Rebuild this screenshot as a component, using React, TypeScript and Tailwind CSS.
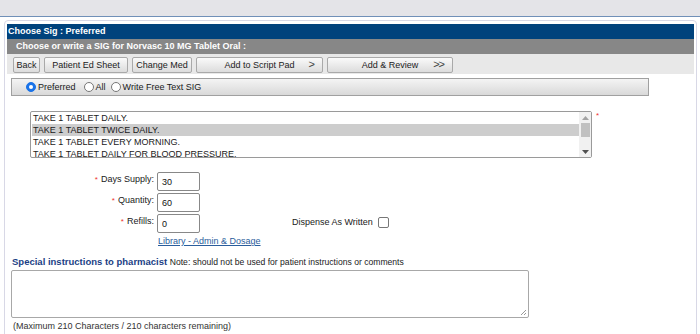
import React, { useState } from 'react';

const sigs = [
    'TAKE 1 TABLET DAILY.',
    'TAKE 1 TABLET TWICE DAILY.',
    'TAKE 1 TABLET EVERY MORNING.',
    'TAKE 1 TABLET DAILY FOR BLOOD PRESSURE.',
];

const ToolButton: React.FC<{ label: string; width: string; arrow?: string }> = ({ label, width, arrow }) => (
    <button
        className={`relative h-[16px] ${width} whitespace-nowrap rounded-[2px] border border-[#a9a9a9] bg-gradient-to-b from-[#fafafa] to-[#dcdcdc] text-[9px] leading-[14px] text-[#222] flex items-center justify-center`}
    >
        <span>{label}</span>
        {arrow && <span className="absolute right-[8px] top-0 text-[11px] leading-[13px] text-[#444] tracking-[-1px]">{arrow}</span>}
    </button>
);

const FieldRow: React.FC<{ label: string; value: string; extra?: React.ReactNode }> = ({ label, value, extra }) => (
    <div className="flex items-start h-[21px]">
        <div className="w-[150px] text-right pr-[3px] pt-[2px] leading-[11px] whitespace-nowrap">
            <span className="text-[#e33] text-[8px] align-top mr-[3px]">*</span>
            {label}:
        </div>
        <div className="w-[43px] h-[19px] border border-[#888] rounded-[2px] pl-[4px] pt-[4px] leading-[11px] text-[#111]">{value}</div>
        {extra}
    </div>
);

export default function App() {
    const [selected, setSelected] = useState(1);

    return (
        <div className="w-[700px] h-[334px] overflow-hidden bg-white font-['Liberation_Sans',Arial,sans-serif] text-[9px] text-[#1a1a1a]">
            <div className="h-[17px] bg-[#e4e4e8] border-b border-[#7090b8]" />

            <div className="mt-[3px] ml-[4px] mr-[3px] h-[320px] border border-[#d8d8e6] rounded-t-[4px] px-[2px] pt-[3px]">
                <div className="h-[15px] bg-[#00427c] text-white font-bold leading-[15px] pl-[1px]">Choose Sig : Preferred</div>
                <div className="h-[15px] bg-[#878787] text-white font-bold leading-[15px] pl-[9px]">
                    Choose or write a SIG for Norvasc 10 MG Tablet Oral :
                </div>
                <div className="h-[20px] bg-[#e8e8e8] flex items-start gap-[4px] pl-[6px] pt-[3px]">
                    <ToolButton label="Back" width="w-[27px]" />
                    <ToolButton label="Patient Ed Sheet" width="w-[84px]" />
                    <ToolButton label="Change Med" width="w-[60px]" />
                    <ToolButton label="Add to Script Pad" width="w-[127px]" arrow=">" />
                    <ToolButton label="Add & Review" width="w-[126px]" arrow=">>" />
                </div>

                <div className="mt-[4px] ml-[4px] w-[638px] h-[18px] border border-[#a0a0a0] bg-gradient-to-b from-[#f4f4f4] to-[#d9d9d9] flex items-center pl-[14px] leading-[11px]">
                    <label className="flex items-center gap-[2px]">
                        <span className="w-[10px] h-[10px] rounded-full bg-[#1a73e8] border border-[#1a73e8] flex items-center justify-center">
                            <span className="w-[4px] h-[4px] rounded-full bg-white" />
                        </span>
                        Preferred
                    </label>
                    <label className="flex items-center gap-[2px] ml-[8px]">
                        <span className="w-[10px] h-[10px] rounded-full bg-white border border-[#777]" />
                        All
                    </label>
                    <label className="flex items-center gap-[2px] ml-[5px]">
                        <span className="w-[10px] h-[10px] rounded-full bg-white border border-[#777]" />
                        Write Free Text SIG
                    </label>
                </div>

                <div className="flex items-start mt-[15px] ml-[23px]">
                    <div className="w-[562px] h-[47px] border border-[#9a9a9a] rounded-[2px] flex">
                        <div className="flex-1 pl-[1px]">
                            {sigs.map((s, i) => (
                                <div
                                    key={s}
                                    onClick={() => setSelected(i)}
                                    className={`h-[12px] leading-[12px] pl-[1px] ${i === selected ? 'bg-[#cdcdcd]' : ''}`}
                                >
                                    {s}
                                </div>
                            ))}
                        </div>
                        <div className="w-[12px] bg-[#f1f1f1] flex flex-col items-center">
                            <div className="h-[11px] flex items-center justify-center">
                                <svg width="7" height="4" viewBox="0 0 7 4"><path d="M0 4 L3.5 0 L7 4 Z" fill="#a3a3a3" /></svg>
                            </div>
                            <div className="w-[9px] h-[14px] bg-[#c1c1c1]" />
                            <div className="flex-1" />
                            <div className="h-[11px] flex items-center justify-center">
                                <svg width="7" height="4" viewBox="0 0 7 4"><path d="M0 0 L7 0 L3.5 4 Z" fill="#505050" /></svg>
                            </div>
                        </div>
                    </div>
                    <span className="text-[#e33] text-[8px] leading-[8px] ml-[4px] mt-[1px]">*</span>
                </div>

                <div className="mt-[14px]">
                    <FieldRow label="Days Supply" value="30" />
                    <FieldRow label="Quantity" value="60" />
                    <FieldRow
                        label="Refills"
                        value="0"
                        extra={
                            <div className="flex items-center ml-[92px] mt-[3px] leading-[11px] whitespace-nowrap">
                                Dispense As Written
                                <span className="ml-[5px] w-[11px] h-[11px] border border-[#777] rounded-[2px] bg-white" />
                            </div>
                        }
                    />
                    <div className="ml-[151px] mt-[1px] leading-[11px]">
                        <a className="text-[#2a5d9c] underline">Library - Admin &amp; Dosage</a>
                    </div>
                </div>

                <div className="mt-[9px] ml-[5px] leading-[11px] whitespace-nowrap">
                    <span className="text-[#1b3f85] font-bold text-[9.5px]">Special instructions to pharmacist</span>{' '}
                    <span className="text-[8.6px]">Note: should not be used for patient instructions or comments</span>
                </div>
                <div className="ml-[4px] mt-[2px] w-[518px] h-[48px] border border-[#a8a8a8] rounded-[2px] relative">
                    <svg className="absolute right-[1px] bottom-[1px]" width="7" height="7" viewBox="0 0 7 7">
                        <path d="M6 1 L1 6 M6 4 L4 6" stroke="#999" strokeWidth="1" />
                    </svg>
                </div>
                <div className="ml-[6px] mt-[3px] leading-[11px] text-[#333]">
                    (Maximum 210 Characters / 210 characters remaining)
                </div>
            </div>
        </div>
    );
}
